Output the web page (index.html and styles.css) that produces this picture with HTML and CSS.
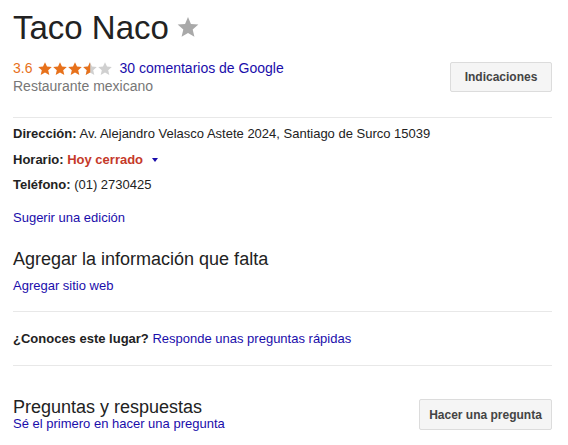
FILE: index.html
```html
<!DOCTYPE html>
<html lang="es">
<head>
<meta charset="utf-8">
<link rel="stylesheet" href="styles.css">
</head>
<body>
<div class="panel">
  <div class="head">
    <div class="head-main">
      <div class="title-row">
        <h1 class="title">Taco Naco</h1>
        <svg class="save-star" width="22" height="22" viewBox="0 0 24 24"><path d="M12 1.2l3.2 7.5 8.1.7-6.2 5.4 1.9 7.9L12 18.5l-7 4.2 1.9-7.9L.7 9.4l8.1-.7z" fill="#a9a9a9"/></svg>
      </div>
      <div class="rating-row">
        <span class="score">3.6</span>
        <span class="stars">
          <svg width="74" height="13" viewBox="0 0 74 13">
            <defs>
              <path id="st" d="M7 0.2l2 4.4 4.8.4-3.6 3.2 1.1 4.7L7 10.4l-4.3 2.5 1.1-4.7L.2 5l4.8-.4z"/>
              <clipPath id="half"><rect x="0" y="0" width="7.2" height="13"/></clipPath>
            </defs>
            <use href="#st" x="0" fill="#e7711b"/>
            <use href="#st" x="15" fill="#e7711b"/>
            <use href="#st" x="30" fill="#e7711b"/>
            <use href="#st" x="45" fill="#d0d0d0"/>
            <g transform="translate(45 0)"><use href="#st" fill="#e7711b" clip-path="url(#half)"/></g>
            <use href="#st" x="60" fill="#d0d0d0"/>
          </svg>
        </span>
        <a class="link" href="#">30 comentarios de Google</a>
      </div>
      <div class="category">Restaurante mexicano</div>
    </div>
    <button class="btn btn-dir">Indicaciones</button>
  </div>

  <div class="info">
    <div class="info-row"><b>Dirección:</b> Av. Alejandro Velasco Astete 2024, Santiago de Surco 15039</div>
    <div class="info-row"><b>Horario:</b> <span class="closed">Hoy cerrado</span> <span class="caret"></span></div>
    <div class="info-row"><b>Teléfono:</b> (01) 2730425</div>
    <a class="link suggest" href="#">Sugerir una edición</a>
  </div>

  <div class="missing">
    <h2 class="sub">Agregar la información que falta</h2>
    <a class="link block" href="#">Agregar sitio web</a>
  </div>

  <div class="know">
    <b>¿Conoces este lugar?</b> <a class="link" href="#">Responde unas preguntas rápidas</a>
  </div>

  <div class="qa">
    <div class="qa-main">
      <h2 class="sub sub-qa">Preguntas y respuestas</h2>
      <a class="link block" href="#">Sé el primero en hacer una pregunta</a>
    </div>
    <button class="btn btn-ask">Hacer una pregunta</button>
  </div>
</div>
</body>
</html>
```

FILE: styles.css
```css
* { box-sizing: border-box; }
html, body { margin: 0; padding: 0; background: #fff; }
body {
  font-family: Arial, "Liberation Sans", sans-serif;
  font-size: 13px;
  color: #222;
}
.panel {
  width: 539px;
  margin-left: 13px;
  padding-top: 9px;
}
.head {
  display: flex;
  justify-content: space-between;
  align-items: flex-start;
  padding-bottom: 22px;
  border-bottom: 1px solid #e8e8e8;
}
.title-row { display: flex; align-items: center; gap: 8px; }
.title {
  margin: 0;
  font-size: 33px;
  font-weight: normal;
  line-height: 38px;
  color: #222;
}
.save-star { display: block; margin-top: -2px; }
.rating-row {
  display: flex;
  align-items: center;
  margin-top: 12px;
  font-size: 14px;
  line-height: 18px;
}
.score { color: #e7711b; margin-right: 6px; }
.stars { display: flex; margin-right: 7px; }
.stars svg { display: block; }
.link { color: #1a0dab; text-decoration: none; }
.block { display: block; }
.category { color: #777; font-size: 14px; line-height: 18px; }
.btn {
  font-family: Arial, "Liberation Sans", sans-serif;
  font-size: 12px;
  font-weight: bold;
  color: #444;
  background: #f5f5f5;
  border: 1px solid #dcdcdc;
  border-radius: 2px;
  padding: 0;
}
.btn-dir { margin-top: 53px; width: 102px; height: 30px; }
.info { padding-top: 3px; }
.info-row { line-height: 25.5px; color: #222; }
.info-row b { font-weight: bold; color: #222; }
.closed { color: #c53929; font-weight: bold; }
.caret {
  display: inline-block;
  width: 0; height: 0;
  border-left: 3.5px solid transparent;
  border-right: 3.5px solid transparent;
  border-top: 4px solid #1a0dab;
  vertical-align: middle;
  margin-left: 5px;
}
.suggest { display: block; margin-top: 11px; line-height: 18px; }
.missing {
  padding-top: 20px;
  padding-bottom: 16px;
  border-bottom: 1px solid #e8e8e8;
}
.missing .link { line-height: 18px; margin-top: 6px; }
.sub {
  margin: 0;
  font-size: 18px;
  font-weight: normal;
  line-height: 24px;
  color: #222;
}
.know {
  padding: 18px 0 17px;
  border-bottom: 1px solid #e8e8e8;
  line-height: 18px;
}
.qa {
  display: flex;
  justify-content: space-between;
  align-items: center;
  padding-top: 32px;
}
.sub-qa { line-height: 18px; }
.qa-main .link { line-height: 16px; }
.btn-ask { height: 31px; width: 133px; }
```
